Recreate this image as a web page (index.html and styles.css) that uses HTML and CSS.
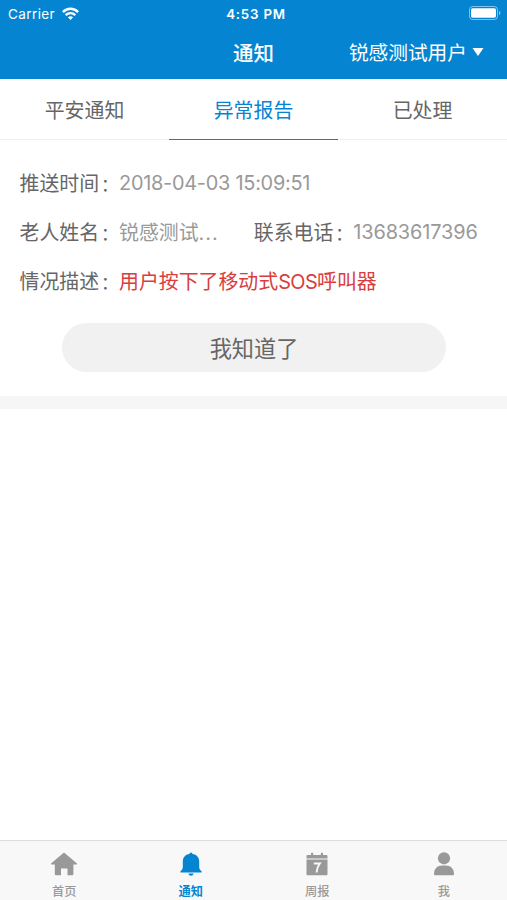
FILE: index.html
```html
<!DOCTYPE html>
<html lang="zh-CN">
<head>
<meta charset="utf-8">
<title>通知</title>
<link rel="stylesheet" href="styles.css">
</head>
<body>
<div class="app">
  <header class="header">
    <div class="status">
      <div class="carrier"><span>Carrier</span>
        <svg class="wifi" width="17" height="13" viewBox="0 0 17 13"><g fill="none" stroke="#fff" stroke-width="2.4"><path d="M.9 5.1C5.1.7 11.9.7 16.1 5.1"/><path d="M3.7 8.100c2.700-2.600 6.900-2.600 9.600 0"/></g><path fill="#fff" d="M5.900 10.300c1.500-1.400 3.700-1.400 5.200 0L8.500 12.900z"/></svg>
      </div>
      <span class="clock">4:53 PM</span>
      <svg class="battery" width="32" height="14" viewBox="0 0 32 14"><rect x=".5" y=".5" width="28" height="13" rx="3.2" fill="none" stroke="#fff" stroke-opacity=".5"/><rect x="2" y="2.3" width="25" height="9.4" rx="1.7" fill="#fff"/><path d="M30 5c1.8.5 1.8 3.5 0 4z" fill="#fff" fill-opacity=".55"/></svg>
    </div>
    <div class="nav">
      <h1 class="title">通知</h1>
      <div class="user"><span>锐感测试用户</span><svg width="12" height="8" viewBox="0 0 12 8"><path d="M.5 0h11L6 8z" fill="#fff"/></svg></div>
    </div>
  </header>
  <nav class="tabs">
    <div class="tab">平安通知</div>
    <div class="tab active">异常报告</div>
    <div class="tab">已处理</div>
  </nav>
  <main class="content">
    <section class="card">
      <div class="row"><span class="label">推送时间<span class="colon">：</span></span><span class="value date">2018-04-03 15:09:51</span></div>
      <div class="row">
        <div class="half"><span class="label">老人姓名<span class="colon">：</span></span><span class="value">锐感测试<span class="dots">...</span></span></div>
        <div class="half"><span class="label">联系电话<span class="colon">：</span></span><span class="value phone">13683617396</span></div>
      </div>
      <div class="row"><span class="label">情况描述<span class="colon">：</span></span><span class="value alert">用户按下了移动式<span class="sos">SOS</span>呼叫器</span></div>
      <button class="confirm">我知道了</button>
    </section>
  </main>
  <footer class="tabbar">
    <div class="item"><svg width="26" height="24" viewBox="0 0 26 24"><path fill="currentColor" d="M13 .5 26 11.5q.2 1-1 1h-2.6V22q0 1.300-1.300 1.300h-4.600v-6.800H10v6.800H5.100Q3.800 23.300 3.800 22v-9.500H1q-1.200 0-1-1z"/></svg><span>首页</span></div>
    <div class="item current"><svg width="26" height="24" viewBox="0 0 26 24"><path fill="currentColor" d="M11.500 2.100a1.500 1.500 0 0 1 3 0c4.200.6 6.700 3.300 6.700 7.500v5.200c0 2 .7 3.300 2.400 4.500v1.300H2.400v-1.300c1.700-1.200 2.400-2.500 2.400-4.500V9.600c0-4.200 2.500-6.900 6.700-7.500zM10.500 21.500h5c-.3 3-4.700 3-5 0z"/></svg><span>通知</span></div>
    <div class="item"><svg width="26" height="24" viewBox="0 0 26 24"><path fill="currentColor" d="M3.500 3H7V1.500q1.100-2 2.200 0V3h7.600V1.500q1.100-2 2.200 0V3h3.500q1 0 1 1v2.500h-21V4q0-1 1-1zM2.500 7.500h21v14.800q0 1-1 1h-19q-1 0-1-1z"/><path fill="none" stroke="#f8f8f8" stroke-width="2" d="M9.800 11.500h6c-2.200 2.800-3 5.600-3.200 9"/></svg><span>周报</span></div>
    <div class="item"><svg width="26" height="24" viewBox="0 0 26 24"><circle cx="13" cy="6.300" r="6.100" fill="currentColor"/><path fill="currentColor" d="M3 22c0-5.500 3.500-8.500 8-8.500h4c4.500 0 8 3 8 8.500q0 1.300-1.300 1.300H4.300Q3 23.300 3 22z"/></svg><span>我</span></div>
  </footer>
</div>
</body>
</html>
```

FILE: styles.css
```css
* { box-sizing: border-box; }
body {
  margin: 0;
  background: #fff;
  color: #666;
  font-family: Inter, "Noto Sans CJK SC", sans-serif;
  font-size: 19.9px;
}
.app { display: flex; flex-direction: column; height: 900px; }
.header { height: 79px; background: #0585d1; color: #fff; }
.status {
  display: grid;
  grid-template-columns: 1fr auto 1fr;
  align-items: center;
  height: 27px;
  padding: 0 6px 0 8px;
  font-size: 13.5px;
}
.carrier { display: flex; align-items: center; gap: 7px; letter-spacing: .4px; }
.clock { font-weight: 600; font-size: 13.3px; letter-spacing: .8px; padding-left: 3px; }
.battery { justify-self: end; margin-top: -1px; }
.nav {
  display: grid;
  grid-template-columns: 1fr auto 1fr;
  align-items: center;
  height: 50px;
}
.title { grid-column: 2; margin: 0; font-size: 20.5px; font-weight: 500; }
.user { display: flex; align-items: center; justify-content: flex-end; gap: 5px; padding-right: 23px; font-size: 19.7px; }
.user span { padding-bottom: 1px; }
.tabs { display: flex; height: 61px; border-bottom: 1px solid #eee; }
.tab { flex: 1; height: 61px; padding-top: 1px; line-height: 62px; text-align: center; }
.active { color: #0585d1; border-bottom: 1px solid #0585d1; }
.content { flex: 1; }
.card { padding: 18px 19px 24px 19.5px; height: 269px; border-bottom: 13px solid #f6f6f6; }
.row, .half { display: flex; align-items: center; white-space: nowrap; }
.row { height: 49px; }
.half { width: 234.5px; }
.label { width: 99.5px; }
.colon { padding-left: 2px; font-size: 17.500px; }
.value { color: #999; }
.date { letter-spacing: -.25px; }
.phone { letter-spacing: -.1px; }
.dots { letter-spacing: 1px; }
.value.alert { color: #d93d3d; }
.sos { letter-spacing: -.6px; }
.confirm {
  display: block;
  width: 384px;
  height: 49px;
  margin: 18px 0 0 42.5px;
  padding: 0 0 2px;
  border: 0;
  border-radius: 25px;
  background: #f1f1f1;
  color: #666;
  font: inherit;
  font-size: 22.2px;
}
.tabbar { display: flex; height: 60px; padding-left: 1px; border-top: 1px solid #ddd; background: #f8f8f8; color: #999; }
.item { flex: 1; display: flex; flex-direction: column; align-items: center; padding-top: 11px; font-size: 12.2px; }
.item svg { flex-shrink: 0; }
.item span { margin-top: 7px; line-height: 18px; font-weight: 500; }
.current { color: #0585d1; }
.current span { font-weight: 700; }
```
